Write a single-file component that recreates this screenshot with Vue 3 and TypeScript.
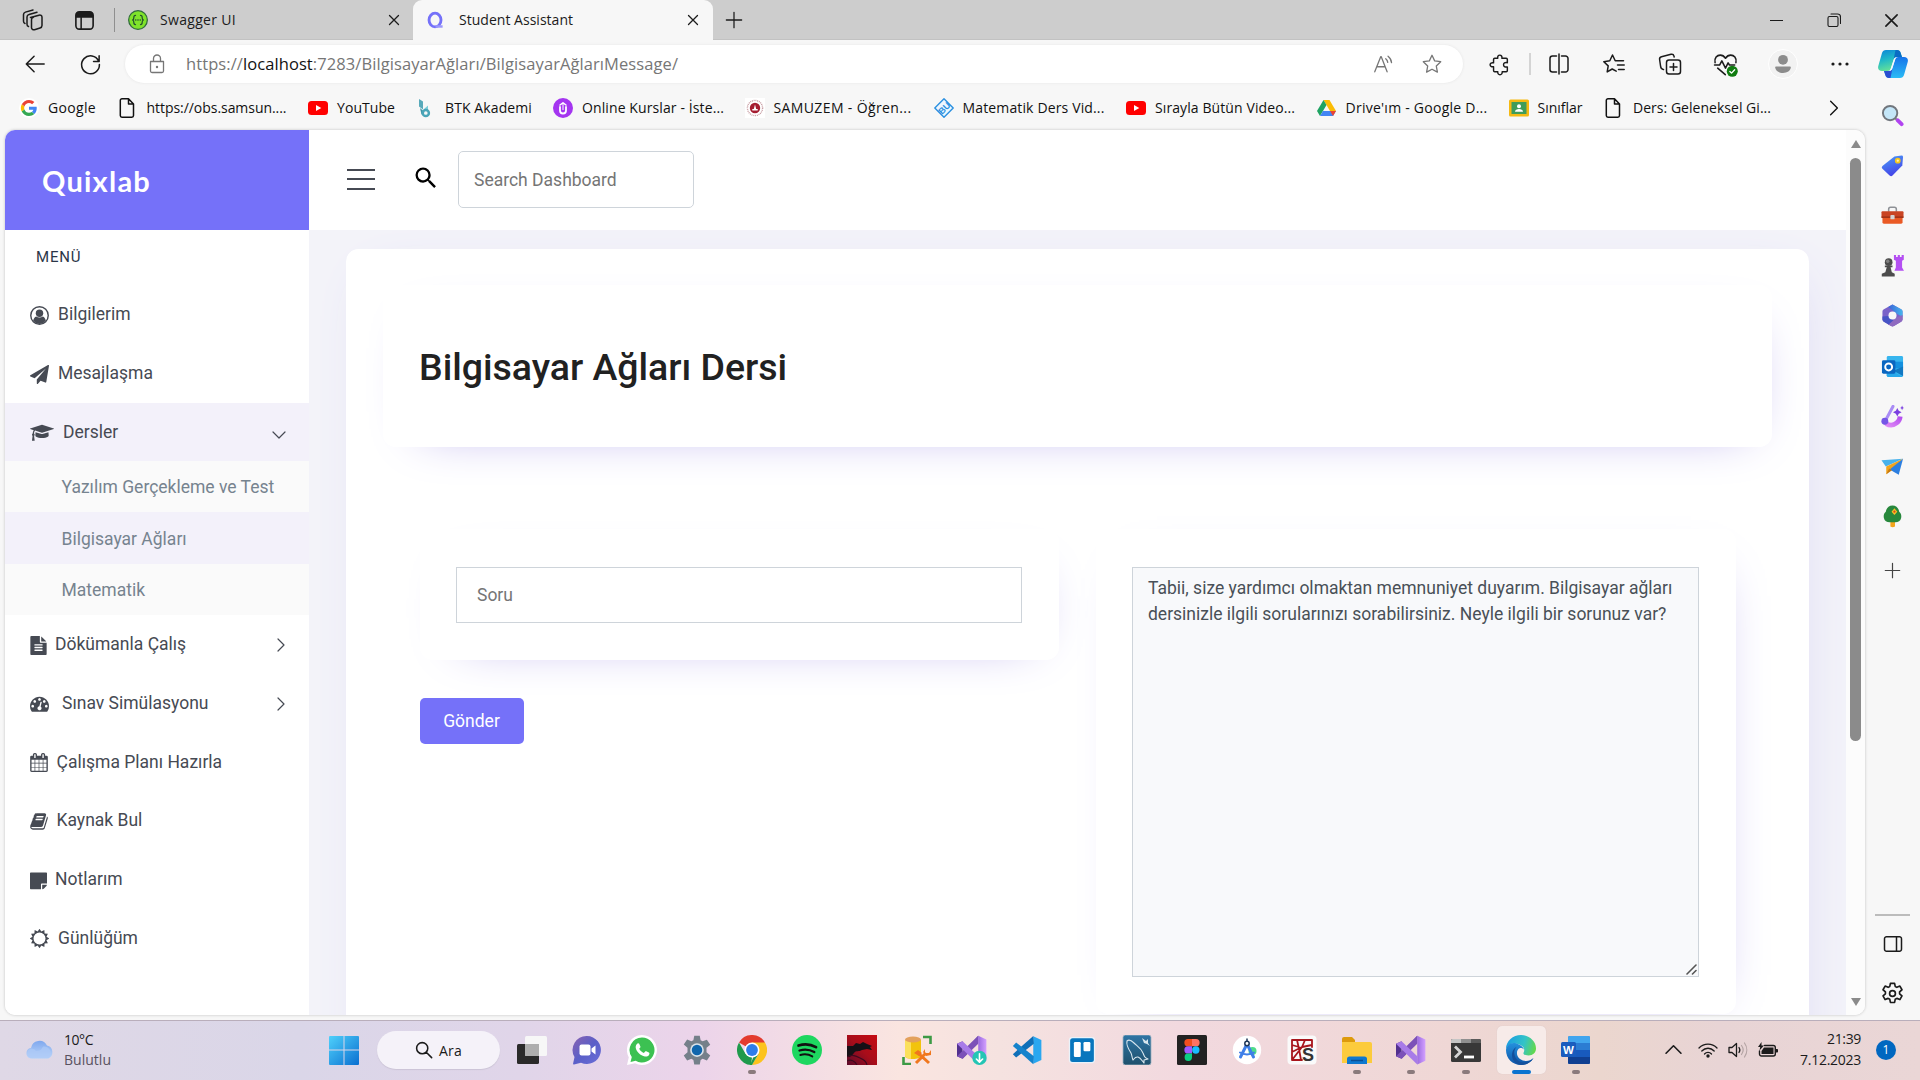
<script setup lang="ts">
import { h } from 'vue'

interface Icon { vb: string; body: string }

const line = (d: string, w = 1.5, c = 'currentColor') =>
  `<path d="${d}" fill="none" stroke="${c}" stroke-width="${w}" stroke-linecap="round" stroke-linejoin="round"/>`

const sunPoints = Array.from({ length: 24 }, (_, i) => {
  const r = i % 2 ? 7.6 : 10.2
  const a = (i * Math.PI) / 12
  return `${(10 + r * Math.sin(a)).toFixed(2)} ${(10 - r * Math.cos(a)).toFixed(2)}`
}).join('L')

const gearOutline = 'M10 2.2h4l.6 3 1.6.9 2.9-1.2 2 3.5-2.3 2v1.9l2.3 2-2 3.5-2.9-1.1-1.6.9-.6 3h-4l-.6-3-1.6-.9-2.9 1.1-2-3.5 2.3-2v-1.9l-2.3-2 2-3.5 2.9 1.2 1.6-.9z'

const vsBody = (id: string) =>
  `<defs><linearGradient id="${id}" x1="0" x2="1"><stop offset="0" stop-color="#9b6be0"/><stop offset="1" stop-color="#d3a0ff"/></linearGradient></defs>
  <path d="M0 7 4.500 5v14L0 17z" fill="#52308f"/><path d="M17 .5L4.500 14 4.500 19 17 6z" fill="#6b45a8"/><path d="M17 .5V7L4.500 19 0 17z" fill="#7c51b8"/><path d="M4.500 5L17 17v6.500L0 7z" fill="#a87be8"/><path d="M17 .5l6.500 3v17l-6.500 3z" fill="url(#${id})"/>`

const icons: Record<string, Icon> = {
  userCircle: { vb: '0 0 20 20', body: '<circle cx="10" cy="10" r="9.2" fill="none" stroke="currentColor" stroke-width="1.5"/><circle cx="10" cy="7.6" r="3.9" fill="currentColor"/><path d="M3.3 15.6c.5-2.700 1.700-4.100 3.200-4.600 2 1.600 5 1.600 7 0 1.500.5 2.700 1.900 3.200 4.600A9 9 0 0 1 10 19a9 9 0 0 1-6.700-3.400z" fill="currentColor"/>' },
  plane: { vb: '0 0 1792 1792', body: '<path fill="currentColor" d="M1764 11q33 24 27 64l-256 1536q-5 29-32 45-14 8-31 8-11 0-24-5l-453-185-242 295q-18 23-49 23-13 0-22-4-19-7-30.5-23.500t-11.500-36.500v-349l864-1059-1069 925-395-162q-37-14-40-55-2-40 32-59l1664-960q15-9 32-9 20 0 36 11z"/>' },
  cap: { vb: '-256 0 2304 1792', body: '<path fill="currentColor" d="M1518 860l18 316q4 69-82 128t-235 93.500-323 34.500-323-34.500-235-93.500-82-128l18-316 574 181q22 7 48 7t48-7zm530-324q0 23-22 31l-1120 352q-4 1-10 1t-10-1l-652-206q-43 34-71 111.500t-34 178.500q63 36 63 109 0 69-58 107l58 433q2 14-8 25-9 11-24 11h-192q-15 0-24-11-10-11-8-25l58-433q-58-38-58-107 0-73 65-111 11-207 98-330l-333-104q-22-8-22-31t22-31l1120-352q4-1 10-1t10 1l1120 352q22 8 22 31z"/>' },
  fileText: { vb: '128 0 1536 1792', body: '<path fill="currentColor" d="M1596 476q14 14 28 36h-472v-472q22 14 36 28zm-476 164h544v1056q0 40-28 68t-68 28h-1344q-40 0-68-28t-28-68v-1600q0-40 28-68t68-28h800v544q0 40 28 68t68 28zm160 736v-64q0-14-9-23t-23-9h-704q-14 0-23 9t-9 23v64q0 14 9 23t23 9h704q14 0 23-9t9-23zm0-256v-64q0-14-9-23t-23-9h-704q-14 0-23 9t-9 23v64q0 14 9 23t23 9h704q14 0 23-9t9-23zm0-256v-64q0-14-9-23t-23-9h-704q-14 0-23 9t-9 23v64q0 14 9 23t23 9h704q14 0 23-9t9-23z"/>' },
  gauge: { vb: '0 0 1792 1792', body: '<path fill="currentColor" d="M384 1152q0-53-37.500-90.500t-90.500-37.500-90.500 37.500-37.500 90.500 37.500 90.500 90.500 37.500 90.500-37.500 37.500-90.500zm192-448q0-53-37.500-90.500t-90.500-37.500-90.500 37.500-37.500 90.500 37.500 90.500 90.500 37.500 90.500-37.500 37.500-90.500zm428 481l101-382q6-26-7.500-48.500t-38.500-29.500-48 6.500-30 39.500l-101 382q-60 5-107 43.500t-63 98.500q-20 77 20 146t117 89 146-20 89-117q16-60-6-117t-72-91zm660-33q0-53-37.500-90.500t-90.500-37.500-90.500 37.500-37.500 90.500 37.500 90.500 90.500 37.500 90.500-37.500 37.500-90.500zm-640-640q0-53-37.500-90.500t-90.500-37.500-90.500 37.500-37.500 90.500 37.500 90.500 90.500 37.500 90.500-37.500 37.500-90.500zm448 192q0-53-37.500-90.500t-90.500-37.500-90.500 37.500-37.500 90.500 37.500 90.500 90.500 37.500 90.500-37.500 37.500-90.500zm320 448q0 261-141 483-19 29-54 29h-1402q-35 0-54-29-141-221-141-483 0-182 71-348t191-286 286-191 348-71 348 71 286 191 191 286 71 348z"/>' },
  calendar: { vb: '64 0 1664 1792', body: '<path fill="currentColor" d="M192 1664h288v-288h-288v288zm352 0h320v-288h-320v288zm-352-352h288v-320h-288v320zm352 0h320v-320h-320v320zm-352-384h288v-288h-288v288zm736 736h320v-288h-320v288zm-384-736h320v-288h-320v288zm768 736h288v-288h-288v288zm-384-352h320v-320h-320v320zm-352-864v-288q0-13-9.500-22.500t-22.500-9.500h-64q-13 0-22.500 9.500t-9.500 22.500v288q0 13 9.500 22.500t22.500 9.500h64q13 0 22.500-9.500t9.500-22.500zm736 864h288v-320h-288v320zm-384-384h320v-288h-320v288zm384 0h288v-288h-288v288zm32-480v-288q0-13-9.500-22.500t-22.500-9.500h-64q-13 0-22.500 9.500t-9.500 22.500v288q0 13 9.500 22.500t22.500 9.500h64q13 0 22.500-9.500t9.500-22.500zm384-64v1280q0 52-38 90t-90 38h-1408q-52 0-90-38t-38-90v-1280q0-52 38-90t90-38h128v-96q0-66 47-113t113-47h64q66 0 113 47t47 113v96h384v-96q0-66 47-113t113-47h64q66 0 113 47t47 113v96h128q52 0 90 38t38 90z"/>' },
  book: { vb: '64 0 1664 1792', body: '<path fill="currentColor" d="M1703 478q40 57 18 129l-275 906q-19 64-76.500 107.500t-122.500 43.500h-923q-77 0-148.500-53.500t-99.500-131.500q-24-67-2-127 0-4 3-27t4-37q1-8-3-21.500t-3-19.500q2-11 8-21t16.500-23.500 16.500-23.500q23-38 45-91.500t30-91.500q3-10 .5-30t-.5-28q3-11 17-28t17-23q21-36 42-92t25-90q1-9-2.500-32t.5-28q4-13 22-30.500t22-22.500q19-26 42.500-84.500t27.500-96.500q1-8-3-25.500t-2-26.500q2-8 9-18t18-23 17-21q8-12 16.500-30.500t15-35 16-36 19.500-32 26.500-23.500 36-11.500 47.500 5.500l-1 3q38-9 51-9h761q74 0 114 56t18 130l-274 906q-36 119-71.500 153.500t-128.500 34.500h-869q-27 0-38 15-11 16-1 43 24 70 144 70h923q29 0 56-15.500t35-41.500l300-987q7-22 5-57 38 15 59 43zm-1064 2q-4 13 2 22.500t20 9.500h608q13 0 25.500-9.500t16.500-22.500l21-64q4-13-2-22.500t-20-9.500h-608q-13 0-25.500 9.500t-16.500 22.500zm-83 256q-4 13 2 22.500t20 9.500h608q13 0 25.500-9.500t16.500-22.500l21-64q4-13-2-22.500t-20-9.500h-608q-13 0-25.500 9.500t-16.500 22.500z"/>' },
  note: { vb: '0 0 17 19', body: '<path fill="currentColor" d="M1 1.500h15c.6 0 1 .4 1 1V12.500h-5c-.6 0-1 .4-1 1v4.700H1c-.6 0-1-.4-1-1V2.500c0-.6.4-1 1-1z"/><path fill="currentColor" d="M12.200 13.700h4.700c-.1.700-.3 1.200-.7 1.600l-2.200 2.200c-.4.400-1 .7-1.800.7z"/>' },
  sun: { vb: '0 0 20 20', body: `<path fill="currentColor" fill-rule="evenodd" d="M${sunPoints}ZM10 3.700a6.300 6.300 0 1 0 0 12.600 6.300 6.300 0 0 0 0-12.600z"/>` },
  chevR: { vb: '0 0 16 16', body: line('M5 2l6 6-6 6', 1.2) },
  chevD: { vb: '0 0 16 16', body: line('M2 5l6 6 6-6', 1.2) },
  magnify: { vb: '0 0 24 24', body: '<path fill="currentColor" d="M9.500 3A6.500 6.500 0 0 1 16 9.500c0 1.610-.59 3.090-1.560 4.230l.27.270h.79l5 5-1.500 1.500-5-5v-.79l-.27-.27A6.516 6.516 0 0 1 9.500 16 6.500 6.500 0 0 1 3 9.500 6.500 6.500 0 0 1 9.500 3m0 2C7 5 5 7 5 9.500S7 14 9.500 14 14 12 14 9.500 12 5 9.500 5z"/>' },
  workspaces: { vb: '0 0 24 24', body: line('M9.500 9.500l8.500-2.300c1.700-.4 3 .5 3 2v8.300c0 1.300-.7 2.100-2 2.500l-5.500 1.700c-1.500.4-3-.5-3-2v-8c0-1.300.7-2.200 2-2.500M7.500 18.500c-1-.3-1.500-1.200-1.500-2.300V9c0-1.300.8-2.200 2-2.500l8-2.200M4 15.500c-1-.4-1.500-1.200-1.500-2.200V6.500c0-1.200.7-2 1.900-2.400L12 2') },
  tabActions: { vb: '0 0 24 24', body: `<rect x="3" y="3" width="18" height="18" rx="3.500" fill="none" stroke="currentColor" stroke-width="1.700"/><path d="M3 9V6.500A3.500 3.500 0 0 1 6.500 3h11A3.500 3.500 0 0 1 21 6.500V9z" fill="currentColor"/>${line('M8.500 9v12', 1.600)}` },
  swagger: { vb: '0 0 24 24', body: `<circle cx="12" cy="12" r="11.200" fill="#7fe32b" stroke="#2f6a3c" stroke-width="1.500"/>${line('M9 6.500c-2 0-2 1-2 2.500s0 2.500-1.500 3c1.500.5 1.500 1.500 1.500 3s0 2.500 2 2.500M15 6.500c2 0 2 1 2 2.500s0 2.500 1.500 3c-1.500.5-1.500 1.500-1.500 3s0 2.500-2 2.500', 1.500, '#23512f')}<g fill="#23512f"><circle cx="9.300" cy="12" r="1"/><circle cx="12" cy="12" r="1"/><circle cx="14.700" cy="12" r="1"/></g>` },
  q: { vb: '0 0 20 20', body: '<ellipse cx="9.500" cy="9.500" rx="6.300" ry="7.200" fill="none" stroke="#7571f9" stroke-width="3"/><path d="M10 16.300h7.500" stroke="#9a97fb" stroke-width="2.600"/>' },
  close: { vb: '0 0 12 12', body: line('M1.500 1.500l9 9M10.500 1.500l-9 9', 1.300) },
  plus: { vb: '0 0 20 20', body: line('M10 1.500v17M1.500 10h17', 1.400) },
  min: { vb: '0 0 14 14', body: '<path d="M0 7h14" stroke="currentColor" stroke-width="1.100"/>' },
  restore: { vb: '0 0 14 14', body: line('M2.500 3.500h7a1.500 1.500 0 0 1 1.500 1.500v7a1.500 1.500 0 0 1-1.500 1.500h-7A1.500 1.500 0 0 1 1 12V5a1.500 1.500 0 0 1 1.500-1.500zM4 1h6.500A3 3 0 0 1 13.500 4v6.500', 1.100) },
  back: { vb: '0 0 24 24', body: line('M22 12H2.500M11 3.500L2.500 12l8.500 8.500', 1.600) },
  refresh: { vb: '0 0 24 24', body: line('M20.500 8.500A9.300 9.300 0 1 0 21.300 12M21 3v5.800h-5.800', 1.600) },
  lock: { vb: '0 0 20 20', body: line('M3.500 7.500h13v9.500a1.500 1.500 0 0 1-1.500 1.500h-10A1.500 1.500 0 0 1 3.500 17zM6.500 7.500V4.500a3.500 3.500 0 0 1 7 0v3', 1.300) + '<circle cx="10" cy="13" r="1.200" fill="currentColor"/>' },
  readAloud: { vb: '0 0 24 24', body: line('M3 20.500L9.500 4h.6l6.400 16.500M5.300 15h9M15 6.200c1.200 1 2 2.400 2.200 4M17.500 3.500c2.200 1.700 3.600 4.200 3.800 7', 1.400) },
  star: { vb: '0 0 24 24', body: line('M12 2.500l2.900 6.100 6.600.9-4.800 4.700 1.200 6.700L12 17.700l-5.900 3.200 1.200-6.700L2.500 9.500l6.600-.9z', 1.400) },
  puzzle: { vb: '0 0 24 24', body: line('M7 5.500h3.200c-.4-2 .6-3.300 2.100-3.300s2.600 1.300 2.200 3.300H19c.8 0 1.200.5 1.200 1.200v3.400c-2.700-.5-4 .6-4 2.200s1.300 2.700 4 2.200v3.800c0 .8-.5 1.200-1.200 1.200h-4.200c.3 2-.8 3.100-2.300 3.100s-2.600-1.100-2.300-3.100H7c-.8 0-1.200-.4-1.200-1.200v-4c-2.300.3-3.600-.6-3.600-2s1.300-2.300 3.600-2V6.700c0-.8.4-1.200 1.200-1.200z', 1.500) },
  split: { vb: '0 0 24 24', body: line('M9.500 4H5.500A2.500 2.500 0 0 0 3 6.500v11A2.500 2.500 0 0 0 5.500 20h4M14.500 4h4A2.500 2.500 0 0 1 21 6.500v11a2.500 2.500 0 0 1-2.500 2.500h-4M12 2v20', 1.500) },
  favs: { vb: '0 0 24 24', body: line('M14.200 19.200l-4-2.200-5 2.900 1-6L1.800 9.700l6-.9L10.500 3l2.700 5.800h8.300M15.500 13h6.700M16.500 17.500h5.700', 1.500) },
  collections: { vb: '0 0 24 24', body: line('M11 8h9a2.500 2.500 0 0 1 2.500 2.500v9A2.500 2.500 0 0 1 20 22h-9a2.500 2.500 0 0 1-2.500-2.500v-9A2.500 2.500 0 0 1 11 8zM15.500 11.500v7M12 15h7M5.500 17.500l-.8-.2a3 3 0 0 1-2-2.300L1.600 7.500A2.500 2.500 0 0 1 3.500 4.700l9.500-2.400a2.500 2.500 0 0 1 3 1.800l.2.900', 1.500) },
  heart: { vb: '0 0 24 24', body: line('M2 10.200C1 5.500 4 3 7 3c2.200 0 3.800 1.200 5 3 1.200-1.800 2.800-3 5-3 3 0 6 2.500 5 7.200M1.500 12.500h4.800l2.200-4 3.500 7 2.500-5 1.300 2h5M4.500 15.500l7.300 6.300', 1.500) + `<circle cx="18.500" cy="18.500" r="5.300" fill="#107c10"/>${line('M16.200 18.700l1.600 1.600 3-3.200', 1.300, '#fff')}` },
  avatar: { vb: '0 0 30 30', body: '<circle cx="15" cy="15" r="14.500" fill="#f2f2f2" stroke="#fff"/><circle cx="15" cy="10.800" r="4.900" fill="#8c8c8c"/><path d="M8.300 17.500h13.400c.8 0 1.200.500 1.100 1.300-.5 3-3.500 5.200-7.800 5.200s-7.300-2.200-7.800-5.200c-.1-.8.3-1.300 1.100-1.300z" fill="#8c8c8c"/>' },
  dots: { vb: '0 0 24 24', body: '<g fill="currentColor"><circle cx="5" cy="12" r="1.600"/><circle cx="12" cy="12" r="1.600"/><circle cx="19" cy="12" r="1.600"/></g>' },
  copilot: { vb: '0 0 30 30', body: '<defs><linearGradient id="cp1" x1="0" y1="0" x2="0.300" y2="1"><stop offset="0" stop-color="#0b84d8"/><stop offset=".5" stop-color="#20b8c8"/><stop offset="1" stop-color="#62e09a"/></linearGradient><linearGradient id="cp2" x1="0" y1="0" x2="0" y2="1"><stop offset="0" stop-color="#1673ea"/><stop offset="1" stop-color="#2bbcf5"/></linearGradient></defs><path d="M8 1h11c2 0 3 1 3.500 2.500L24 8h-5c-2 0-3 1-3.500 3L13 19c-.6 2-1.500 3-3.500 3H4c-3 0-4.500-2-3.700-5L4 4c.6-2 2-3 4-3z" fill="url(#cp1)"/><path d="M22 29H11c-2 0-3-1-3.500-2.500L6 22h5c2 0 3-1 3.500-3L17 11c.6-2 1.500-3 3.500-3H26c3 0 4.500 2 3.700 5L26 26c-.6 2-2 3-4 3z" fill="url(#cp2)"/><path d="M6 22h5c2 0 3-1 3.500-3l-2 10H11c-2 0-3-1-3.500-2.500z" fill="#2a4fd0"/><path d="M17.500 1H19c2 0 3 1 3.500 2.500L24 8h-5c-2 0-3 1-3.500 3z" fill="#0a6cc4"/><path d="M12.800 19.500l3-9c.6-1.600 1.500-2.300 2.800-2.300-1 .8-1.300 1.600-1.700 2.800l-2.700 8.500c-.5 1.600-1.300 2.300-2.800 2.300.8-.6 1.100-1.300 1.400-2.300z" fill="#f3faff"/>' },
  google: { vb: '0 0 48 48', body: '<circle cx="24" cy="24" r="24" fill="#fff"/><g transform="translate(4.500 4.500) scale(.81)"><path fill="#EA4335" d="M24 9.500c3.540 0 6.710 1.220 9.210 3.600l6.850-6.850C35.900 2.380 30.470 0 24 0 14.620 0 6.510 5.380 2.560 13.220l7.980 6.190C12.430 13.720 17.740 9.500 24 9.500z"/><path fill="#4285F4" d="M46.980 24.550c0-1.570-.15-3.090-.38-4.550H24v9.020h12.940c-.58 2.960-2.260 5.480-4.780 7.180l7.730 6c4.510-4.180 7.090-10.360 7.090-17.650z"/><path fill="#FBBC05" d="M10.530 28.590c-.48-1.450-.76-2.990-.76-4.590s.27-3.140.76-4.590l-7.980-6.190C.92 16.460 0 20.120 0 24c0 3.880.92 7.540 2.560 10.780l7.970-6.190z"/><path fill="#34A853" d="M24 48c6.480 0 11.930-2.130 15.890-5.810l-7.730-6c-2.150 1.450-4.920 2.300-8.160 2.300-6.260 0-11.570-4.220-13.470-9.910l-7.980 6.190C6.510 42.620 14.620 48 24 48z"/></g>' },
  file: { vb: '0 0 20 20', body: line('M4 .8h6.500l5 5.200v11.500a1.700 1.700 0 0 1-1.700 1.700H4a1.700 1.700 0 0 1-1.700-1.700v-15A1.700 1.700 0 0 1 4 .8zM10.500 1v5h5', 1.500) },
  youtube: { vb: '0 0 20 20', body: '<rect x="0" y="3" width="20" height="14" rx="3.500" fill="#f00"/><path d="M8 7l5.300 3L8 13z" fill="#fff"/>' },
  btk: { vb: '0 0 20 20', body: '<path d="M3 1l4 2.500v8L3 8.500z" fill="#58a9ba"/><path d="M4 10l4.500 4-3 2.500z" fill="#3f93a6"/><path d="M8 11l4-3.500v5z" fill="#7ccbd8"/><circle cx="9.800" cy="15" r="3.100" fill="none" stroke="#4aa5b8" stroke-width="2.500"/>' },
  udemy: { vb: '0 0 20 20', body: `<circle cx="10" cy="10" r="10" fill="#a435f0"/>${line('M7 9v3.500a3 3 0 0 0 6 0V9', 1.800, '#fff')}${line('M7 7l3-2.200L13 7', 1.500, '#fff')}<path d="M10 5v7" stroke="#fff" stroke-width="1"/>` },
  samuzem: { vb: '0 0 20 20', body: '<rect width="20" height="20" fill="#fff"/><circle cx="10" cy="10" r="7.600" fill="none" stroke="#c9a0a6" stroke-width="1.400" stroke-dasharray="1 .8"/><circle cx="10" cy="10" r="5.200" fill="#a51c30"/><path d="M10 6.500l1.200 4.500h1.500v1.500H7.300V11h1.500z" fill="#fff"/>' },
  bu: { vb: '0 0 20 20', body: '<path d="M10 .8L19.200 10 10 19.200.8 10z" fill="#eef7ff" stroke="#2b90e0" stroke-width="1.400" stroke-linejoin="round"/><text x="10" y="13.500" font-size="9" font-weight="700" font-family="Liberation Sans, sans-serif" text-anchor="middle" fill="#2b90e0" transform="rotate(-45 10 10)">BU</text>' },
  drive: { vb: '0 0 20 20', body: '<path d="M6.500 2h6L19 13h-6z" fill="#fbbc04"/><path d="M6.500 2L0 13l3 5L9.500 7z" fill="#1ea362"/><path d="M6 13h13l-3 5H3z" fill="#4285f4"/><path d="M13 13h6l-3 5z" fill="#ea4335"/>' },
  classroom: { vb: '0 0 20 20', body: '<rect y="1.500" width="20" height="17" rx="1.500" fill="#f5b912"/><rect x="2.500" y="4" width="15" height="12" fill="#3f9c5a"/><circle cx="10" cy="8.200" r="2" fill="#fff"/><path d="M6 13.800c0-2 2-2.800 4-2.800s4 .8 4 2.800z" fill="#fff"/>' },
  sSearch: { vb: '0 0 24 24', body: '<path d="M14.500 14.500l3.500 3.500" stroke="#8a8f96" stroke-width="2.500"/><path d="M17.500 17l4 4" stroke="#b144f0" stroke-width="4" stroke-linecap="round"/><circle cx="9.500" cy="9.500" r="7.500" fill="#c4e6f8" stroke="#71767d" stroke-width="2"/>' },
  sTag: { vb: '0 0 24 24', body: '<defs><linearGradient id="tg" x1="0" y1="0" x2=".4" y2="1"><stop offset="0" stop-color="#4aa0f8"/><stop offset="1" stop-color="#4445e8"/></linearGradient></defs><path d="M14 2.500L21.500 1.500q1.500 0 1.500 1.500l-.8 9L12 22.500q-1.500 1.200-3 0l-7.500-7q-1.500-1.500 0-3z" fill="url(#tg)"/><circle cx="17.500" cy="7" r="3" fill="#f5c51c"/><circle cx="17.500" cy="7" r="1.200" fill="#fff3b0"/>' },
  sToolbox: { vb: '0 0 24 24', body: '<path d="M8 8V5.500C8 4.300 9 3.500 10 3.500h4c1 0 2 .8 2 2V8" fill="none" stroke="#8e9196" stroke-width="1.600"/><rect x=".5" y="7.500" width="23" height="7" rx="1" fill="#c94423"/><rect x="1.500" y="13.500" width="21" height="7" rx="1.500" fill="#ea5a25"/><path d="M.5 13h23v1.500H.5z" fill="#9a3016"/><rect x="9.800" y="11.500" width="4.400" height="4.500" rx="1" fill="#d4d4d4"/>' },
  sChess: { vb: '0 0 24 24', body: '<path d="M13.500 1h2.200v2h1.800V1h2.200v2h1.800V1h2.300v5l-1.800 1v7l2 3.500h-10L15.500 14V7l-2-1z" fill="#b450f2"/><g fill="#4c4c4c"><circle cx="8" cy="8.500" r="4"/><path d="M4 12h8v1.800h-2l1.300 5.200 3 1.500V23.500H.8V20.500l3.700-1.500L6 13.800H4z"/></g><circle cx="7" cy="7.500" r="1.800" fill="#818181"/>' },
  s365: { vb: '0 0 24 24', body: '<defs><linearGradient id="m3" x1="0" x2="1"><stop offset="0" stop-color="#3b62d6"/><stop offset="1" stop-color="#46b6ee"/></linearGradient></defs><path d="M12 .5l9 5c1 .6 1.500 1.500 1.500 2.500v8c0 1-.5 1.900-1.500 2.500l-7.500 4.500c-1 .6-2 .6-3 0L3 18.500c-1-.6-1.500-1.500-1.500-2.500V8c0-1 .5-1.900 1.500-2.500z" fill="#7a62c9"/><path d="M7.500 3L12 .5l9 5c1 .6 1.500 1.500 1.500 2.500v5.500L16 10l-4-3.500z" fill="url(#m3)"/><path d="M22.500 11.500V16c0 1-.5 1.900-1.500 2.500l-7.500 4.500c-1 .6-2 .6-3 0L7 21l9-7z" fill="#8f6ac0"/><path d="M1.500 13v3c0 1 .5 1.900 1.500 2.500L8 21.500l5-4.500-5-4.500z" fill="#4754c5"/><circle cx="12" cy="12" r="4.200" fill="#f7f7f7"/>' },
  sOutlook: { vb: '0 0 24 24', body: '<rect x="6" y="1" width="17" height="22" rx="1.500" fill="#37b5ee"/><path d="M6 7h17v7H6z" fill="#1490df"/><path d="M6 14l17 9H7.500A1.500 1.500 0 0 1 6 21.500z" fill="#28a8ea"/><path d="M23 12v10L13 16.500z" fill="#1278c2"/><rect x="1" y="5.500" width="14" height="14" rx="1.500" fill="#0a66c0"/><circle cx="8" cy="12.500" r="3.600" fill="none" stroke="#fff" stroke-width="2"/>' },
  sDesigner: { vb: '0 0 24 24', body: '<defs><linearGradient id="dg" x1="0" y1="1" x2="1" y2="0"><stop offset="0" stop-color="#e08af5"/><stop offset="1" stop-color="#b34df0"/></linearGradient></defs><path d="M4 16c0 3.500 3 5 6.500 5S19.500 18 20 12" fill="none" stroke="url(#dg)" stroke-width="5"/><path d="M12.500 1.500l-7.500 14" stroke="#a98cf5" stroke-width="3.200" stroke-linecap="round"/><circle cx="4" cy="17" r="3.600" fill="#7556e6"/><path d="M17 3l1.500 3L21.500 7.500l-3 1.500L17 12l-1.500-3-3-1.500 3-1.500zM22 .5l.7 1.800 1.300.7-1.300.7L22 5.500l-.7-1.800L20 3l1.300-.7z" fill="#7b3fe0"/>' },
  sPlane: { vb: '0 0 24 24', body: '<path d="M.5 5.500L23 4 5 12z" fill="#48b2ec"/><path d="M23 4L5.500 12v8l6-5z" fill="#f2a41c"/><path d="M23 4l-4.500 16.500L9 15z" fill="#2d7fe0"/><path d="M5.500 20l3-6 3 2z" fill="#c77a10"/>' },
  sTree: { vb: '0 0 24 24', body: '<path d="M9.800 16h4.800v6.500q-2.400 1.300-4.800 0z" fill="#f3a51c"/><path d="M12 .5c4 0 6.500 3 7 6.500 2 1.500 2.500 4 2 6.500-.7 3-3 4.500-6 4.500H9c-3 0-5.300-1.500-6-4.500-.5-2.500 0-5 2-6.500C5.500 3.500 8 .5 12 .5z" fill="#27883c"/><path d="M14 3.500l3 3.500-3 3.500L11 7z" fill="#f7c325"/><circle cx="14" cy="7" r="1.200" fill="#d8481c"/>' },
  panel: { vb: '0 0 20 20', body: line('M4 2.800h12A2 2 0 0 1 18.500 5v10a2 2 0 0 1-2.500 2.200H4A2 2 0 0 1 1.500 15V5A2 2 0 0 1 4 2.800zM13.500 3v14', 1.500) },
  gear: { vb: '0 0 24 24', body: line(gearOutline, 1.600) + '<circle cx="12" cy="12" r="2.800" fill="none" stroke="currentColor" stroke-width="1.600"/>' },
  grip: { vb: '0 0 11 11', body: line('M1 10L10 1', 1.600, '#555') + line('M6.500 10L10 6.500', 1.600, '#555') },
  cloud: { vb: '0 0 30 20', body: '<defs><linearGradient id="cl" x1="0" y1="0" x2="0" y2="1"><stop offset="0" stop-color="#7fa8ee"/><stop offset="1" stop-color="#bcd6fa"/></linearGradient></defs><path d="M6 9a8.500 8.500 0 0 1 16-2.500A6.800 6.800 0 0 1 23 19.500H6A5.300 5.300 0 0 1 6 9z" fill="url(#cl)"/><path d="M6.500 9.500a5 5 0 0 1 4.500 2.500c3-1 4 1 7-4.500A6.800 6.800 0 0 1 23.500 19.300H6.200A5 5 0 0 1 6.500 9.500z" fill="#aecbf6" opacity=".7"/>' },
  start: { vb: '0 0 30 30', body: '<defs><linearGradient id="st" x1="0" y1="0" x2="1" y2="1"><stop offset="0" stop-color="#4fd0fb"/><stop offset="1" stop-color="#0a6fd0"/></linearGradient></defs><path d="M1 1h13.500v13.500H0V2a1 1 0 0 1 1-1zM15.500 1H29a1 1 0 0 1 1 1v12.500H15.500zM0 15.500h14.500V30H1a1 1 0 0 1-1-1zM15.500 15.500H30V29a1 1 0 0 1-1 1H15.500z" fill="url(#st)"/>' },
  search: { vb: '0 0 20 20', body: line('M8 1.800a6.200 6.200 0 1 1 0 12.400A6.200 6.200 0 0 1 8 1.800zM12.500 12.500l6 6', 1.700) },
  taskView: { vb: '0 0 30 30', body: '<rect x="0" y="9" width="22" height="20" rx="1.500" fill="#2a2a2a"/><rect x="8" y="1" width="22" height="20" rx="1.500" fill="#f7f7f7"/><path d="M8 9h14v12H9.500A1.500 1.500 0 0 1 8 19.500z" fill="#aeaeae"/>' },
  chat: { vb: '0 0 30 30', body: '<defs><linearGradient id="ch" x1="0" y1="0" x2="1" y2="1"><stop offset="0" stop-color="#8a62b0"/><stop offset=".5" stop-color="#5a5fc8"/><stop offset="1" stop-color="#6b6fd8"/></linearGradient></defs><path d="M15 1a14 14 0 1 1-6 26.700L2 29.500c-.8.2-1-.3-.9-1L2.500 22A14 14 0 0 1 15 1z" fill="url(#ch)"/><rect x="7.500" y="9.500" width="11" height="11" rx="2" fill="#fff"/><path d="M19.500 13.500l4-3v9l-4-3z" fill="#fff"/>' },
  whatsapp: { vb: '0 0 30 30', body: '<path d="M15 0a15 15 0 1 1-7 28.300L0 30l1.800-7.700A15 15 0 0 1 15 0z" fill="#fff"/><path d="M15 2.500a12.500 12.500 0 1 1-6.300 23.300l-5.200 1.300 1.300-5A12.500 12.500 0 0 1 15 2.500z" fill="#3cc152"/><path d="M10.500 8.500c.5-.5 1.400-.4 1.700.2l1.200 2.700c.2.500 0 .9-.3 1.300l-.9 1c1 2 2.700 3.500 4.700 4.300l1.200-1.400c.3-.4.700-.5 1.200-.3l2.600 1.300c.5.3.7.700.5 1.300-.5 2-2.600 3-4.500 2.600-4.500-1-8.500-4.700-9.200-8.800-.2-1.700.6-3.200 1.800-4.200z" fill="#fff"/>' },
  settings: { vb: '0 0 24 24', body: '<path d="M9.800.5h4.400l.7 3.600 1.600.9 3.400-1.300 2.700 4-3 2.500v3.600l3 2.500-2.700 4-3.400-1.300-1.600.9-.7 3.600H9.800l-.7-3.600-1.600-.9-3.400 1.300-2.700-4 3-2.500v-3.600l-3-2.500 2.700-4L7.500 5l1.600-.9z" fill="#75808a"/><circle cx="12" cy="12" r="5.500" fill="#d8e2ea"/><circle cx="12" cy="12" r="4.200" fill="#0f66ad"/>' },
  chrome: { vb: '0 0 30 30', body: '<path d="M15 15L2 7.500a15 15 0 0 1 26 0z" fill="#e33b2e"/><path d="M15 15V7.500h13A15 15 0 0 1 15 30l6.500-11.200z" fill="#fcc31e"/><path d="M2 7.500L8.500 18.700 15 22.500l-1 7.500A15 15 0 0 1 2 7.500z" fill="#1f9a4c"/><path d="M21.500 18.800L15 30a15 15 0 0 1-2-.1l3.500-8z" fill="#1f9a4c"/><circle cx="15" cy="15" r="7.500" fill="#fff"/><circle cx="15" cy="15" r="5.900" fill="#2e7de9"/>' },
  spotify: { vb: '0 0 30 30', body: `<circle cx="15" cy="15" r="15" fill="#1ed760"/>${line('M6.500 10.500c6-1.800 12.500-1.200 17.500 1.700', 2.700, '#111')}${line('M7.500 15.500c5-1.500 10.500-.9 14.800 1.600', 2.300, '#111')}${line('M8.300 20c4.200-1.200 8.500-.7 12 1.400', 1.900, '#111')}` },
  dragon: { vb: '0 0 30 30', body: '<defs><linearGradient id="dr" x1="0" y1="1" x2="1" y2="0"><stop offset="0" stop-color="#5c0b2c"/><stop offset=".5" stop-color="#a80d1a"/><stop offset="1" stop-color="#c60a12"/></linearGradient></defs><rect width="30" height="30" fill="url(#dr)"/><path d="M0 11l6 0 3-3 4 1 3-2 4 2 5 2-2 1 2 3-5-1-5 1c-3 2-6 0-8 3-2 2-2 4-7 4z" fill="#151016"/><path d="M0 22c5-3 9-1 13 1s6 3 7 7M0 26c4-2 8 0 10 4" fill="none" stroke="#3d0a1e" stroke-width="1.200"/>' },
  dbTool: { vb: '0 0 30 30', body: '<path d="M3 5v16c0 2 4 3 8 3s8-1 8-3V5z" fill="#f2c30c"/><path d="M3 5v16c0 1.600 2.500 2.600 6 2.900V5z" fill="#fbe05a"/><ellipse cx="11" cy="4.500" rx="8" ry="3" fill="#e3a15c"/><path d="M21 2h7.500v7M1.500 22v7H9" fill="none" stroke="#3d9a45" stroke-width="2.600"/><path d="M14 28l10-10M15 17l12 11" stroke="#f0771e" stroke-width="3"/><path d="M12 18l4-3 4 3-3 3zM23 14v4h4l2-3v5l-5 1-3-4z" fill="#f0771e"/>' },
  vsInst: { vb: '0 0 24 24', body: vsBody('vs1') + `<circle cx="18" cy="18.300" r="5.700" fill="#24c5b4"/>${line('M18 15v6.500M15.500 19.200L18 21.700l2.500-2.500', 1.300, '#fff')}` },
  vscode: { vb: '0 0 24 24', body: '<path d="M17 1l6.500 3v16l-6.500 3z" fill="#2aa7f0"/><path d="M17 .7L.7 15.300 3.300 18 17.500 7z" fill="#0f6fb8"/><path d="M17 23.300L.7 8.700 3.300 6 17.500 17z" fill="#1583cc"/>' },
  trello: { vb: '0 0 24 24', body: '<rect x="1.500" y="1.500" width="21" height="21" rx="2.500" fill="#e9f3fa"/><rect x="2.500" y="2.500" width="19" height="19" rx="2" fill="#0876bd"/><rect x="5.500" y="5.500" width="5.500" height="12" rx="1" fill="#fff"/><rect x="13.200" y="5.500" width="5.500" height="7.500" rx="1" fill="#fff"/>' },
  mysql: { vb: '0 0 30 30', body: '<defs><linearGradient id="my" x1="0" y1="0" x2="0" y2="1"><stop offset="0" stop-color="#2f75a5"/><stop offset="1" stop-color="#1f506c"/></linearGradient></defs><rect x="1" y="0" width="28" height="30" rx="2.500" fill="url(#my)" stroke="#9db4c3" stroke-width=".8"/>' + line('M5 6c2-2 5 0 7 2 3 3 7 5 9 10 1 2 1 4 3 5l2 1-4 1 0 3c-2-2-3-5-6-6-3-.5-4 2-5 3-1-2-1-5-2-7-2-3-5-8-4-12z', 1.100, '#d8e6ee') + '<path d="M20 3l4 3 2-2 0 4 2 3-3-2-3-1z" fill="#d8e6ee"/>' },
  figma: { vb: '0 0 30 30', body: '<rect width="30" height="30" rx="1.500" fill="#222"/><path d="M11 4h4v7.300h-4a3.650 3.650 0 0 1 0-7.300z" fill="#f24e1e"/><path d="M15 4h4a3.650 3.650 0 0 1 0 7.300h-4z" fill="#ff7262"/><path d="M15 11.300v7.300h-4a3.650 3.650 0 0 1 0-7.300z" fill="#a259ff"/><circle cx="18.800" cy="15" r="3.700" fill="#1abcfe"/><path d="M11 18.600h4v3.700a3.700 3.700 0 1 1-4-3.700z" fill="#0acf83"/>' },
  androidStudio: { vb: '0 0 30 30', body: `<circle cx="15" cy="15" r="14.200" fill="#fff"/><circle cx="20.500" cy="16" r="4" fill="#4fdc8a"/>${line('M15 9L8.500 22M15 9l6.500 13', 3, '#3f7fe8')}${line('M8 17.500c4 2.500 10 2.500 14 0', 2, '#3f7fe8')}<circle cx="15" cy="8.500" r="2.200" fill="#fff" stroke="#1d3557" stroke-width="1.500"/><path d="M15 3.500v3" stroke="#1d3557" stroke-width="1.500"/>` },
  spyder: { vb: '0 0 30 30', body: `<rect x=".5" y=".5" width="29" height="29" rx="4" fill="#fafafa"/>${line('M5 5h20v7M5 5v20h10M5 17l10-5 3-7M5 25l10-13 10-2M10 5l2 9 2 11M5 10l7 2', 1.800, '#a8151c')}<text x="21" y="26" text-anchor="middle" font-size="18" font-weight="700" font-family="Liberation Sans, sans-serif" fill="#333">S</text>` },
  explorer: { vb: '0 0 30 30', body: '<path d="M0 4a2 2 0 0 1 2-2h8l3 3v6H0z" fill="#dd9a0c"/><path d="M0 7h28a2 2 0 0 1 2 2v19H0z" fill="#fccb3c"/><path d="M5 29v-5a2.500 2.500 0 0 1 2.500-2.500h15A2.500 2.500 0 0 1 25 24v5z" fill="#0f78cf"/><path d="M9 25.500h12" stroke="#0a4f94" stroke-width="1.500"/>' },
  vs: { vb: '0 0 24 24', body: vsBody('vs2') },
  terminal: { vb: '0 0 30 30', body: '<rect x="0" y="4" width="30" height="23" rx="1.500" fill="#383838"/><path d="M1.500 4H10v4H0V5.500A1.500 1.500 0 0 1 1.500 4z" fill="#c5c5c5"/><path d="M10 4h10v4H10z" fill="#8f8f8f"/><path d="M20 4h8.500A1.500 1.500 0 0 1 30 5.500V8H20z" fill="#5a5a5a"/><path d="M4 11.500l5.500 5.500L4 22.500" fill="none" stroke="#d5d5d5" stroke-width="2.800"/><path d="M13 22h10" stroke="#fff" stroke-width="2.800"/>' },
  edge: { vb: '0 0 30 30', body: '<defs><linearGradient id="ed1" x1="0" y1=".3" x2="1" y2=".5"><stop offset="0" stop-color="#1b9de2"/><stop offset=".6" stop-color="#33c3c8"/><stop offset="1" stop-color="#62d84e"/></linearGradient><linearGradient id="ed2" x1="0" y1="0" x2="0" y2="1"><stop offset="0" stop-color="#2490dd"/><stop offset="1" stop-color="#0f55a8"/></linearGradient></defs><path d="M0 14C0 6 7 0 15 0s15 6 15 13.500c0 4-3 7-7.500 7-3.500 0-5.500-1.200-5-2.700.4-1 .9-1.800.7-3.300C18 12 15.500 10 12 9 7 7.500 2 9 0 14z" fill="url(#ed1)"/><path d="M0 15c.5-5 5-8 10.500-6.500 3.500 1 6.500 3 7.500 6-1.200-1.500-3-2-4.500-1.200C10 15 10 21 14 24c4 3 10 2.500 13.500-1C24.500 28 20 30 15 30 6.500 30 0 23.500 0 15z" fill="url(#ed2)"/><path d="M10.500 12c-4 4-2.500 12 3 14.500 4.500 2 10.500.5 14-3.500C24.500 28 20 30 15 30c-6-1-9.500-6-9-11 .3-3 2-6 4.500-7z" fill="#14509c"/>' },
  word: { vb: '0 0 30 30', body: '<rect x="7" y="1" width="22" height="28" rx="1.500" fill="#2b7cd3"/><path d="M8.500 1h19A1.500 1.500 0 0 1 29 2.500V8H7V2.500A1.500 1.500 0 0 1 8.500 1z" fill="#41a5ee"/><path d="M7 15h22v7H7z" fill="#185abd"/><path d="M7 22h22v5.500a1.500 1.500 0 0 1-1.500 1.500h-19A1.500 1.500 0 0 1 7 27.500z" fill="#103f91"/><rect x="0" y="7" width="15" height="15" rx="1.500" fill="#1a5cbe"/><text x="7.500" y="19" text-anchor="middle" font-size="11.500" font-weight="700" font-family="Liberation Sans, sans-serif" fill="#fff">W</text>' },
  up: { vb: '0 0 16 16', body: line('M1 11.500l7-7 7 7', 1.500) },
  wifi: { vb: '0 0 20 16', body: line('M1 6c5-5.300 13-5.300 18 0M3.800 9c3.500-3.700 8.900-3.700 12.400 0M6.500 12c2-2.100 5-2.100 7 0', 1.300) + '<circle cx="10" cy="14" r="1.700" fill="currentColor"/>' },
  speaker: { vb: '0 0 20 16', body: line('M1 5.500h3L8.500 1.500v13L4 10.500H1z', 1.300) + line('M11 5.500c1 1.500 1 3.500 0 5', 1.300) + line('M13.500 3.500c2 2.700 2 6.300 0 9M16.500 1c3 4.200 3 9.800 0 14', 1.200, '#b3a3a3') },
  battery: { vb: '0 0 20 16', body: line('M6.500 3.500h8.800a2 2 0 0 1 2 2v6.500a2 2 0 0 1-2 2H3.500a2 2 0 0 1-2-2V9', 1.400) + '<path d="M18 7h1c.6 0 1 .4 1 1v1.500c0 .6-.4 1-1 1h-1zM6 5.500h9.500v6.500H3.500V9zM3.500 0L0 5h2.200L1.500 8.500 6 3.500H3.500z" fill="currentColor"/>' },
}

const Ico = (p: { n: string; w: number; hh?: number }) =>
  h('svg', { viewBox: icons[p.n].vb, width: p.w, height: p.hh ?? p.w, innerHTML: icons[p.n].body })
Ico.props = ['n', 'w', 'hh']

/* Tracks a label in or out so that it fills the width given for it. */
const vTrack = {
  mounted(el: HTMLElement, b: { value?: number }) {
    if (!b.value) return
    const n = (el.textContent ?? '').trim().length
    const w = el.getBoundingClientRect().width
    el.style.letterSpacing = `${((b.value - w) / n).toFixed(3)}px`
  },
}

const toolbar = [
  { n: 'split', w: 24 }, { n: 'favs', w: 24 }, { n: 'collections', w: 24 }, { n: 'heart', w: 25 },
]
const bookmarks = [
  { n: 'google', t: 'Google', w: 98.5, tw: 48 },
  { n: 'file', t: 'https://obs.samsun....', w: 190.5, tw: 140 },
  { n: 'youtube', t: 'YouTube', w: 108, tw: 58 },
  { n: 'btk', t: 'BTK Akademi', w: 137, tw: 87 },
  { n: 'udemy', t: 'Online Kurslar - İste...', w: 191.5, tw: 142 },
  { n: 'samuzem', t: 'SAMUZEM - Öğren...', w: 189, tw: 138 },
  { n: 'bu', t: 'Matematik Ders Vid...', w: 192.5, tw: 142 },
  { n: 'youtube', t: 'Sırayla Bütün Video...', w: 190.5, tw: 140 },
  { n: 'drive', t: "Drive'ım - Google D...", w: 192, tw: 142 },
  { n: 'classroom', t: 'Sınıflar', w: 95.5, tw: 45 },
  { n: 'file', t: 'Ders: Geleneksel Gi...', w: 221, tw: 138 },
]
const menuTop = [
  { n: 'userCircle', w: 19, g: 9, t: 'Bilgilerim' },
  { n: 'plane', w: 19, g: 9, t: 'Mesajlaşma' },
]
const subMenu = ['Yazılım Gerçekleme ve Test', 'Bilgisayar Ağları', 'Matematik']
const menuBottom = [
  { n: 'fileText', w: 17, g: 8, t: 'Dökümanla Çalış', more: true },
  { n: 'gauge', w: 19, g: 13, t: 'Sınav Simülasyonu', more: true },
  { n: 'calendar', w: 18, g: 8.5, t: 'Çalışma Planı Hazırla' },
  { n: 'book', w: 18, g: 8.5, t: 'Kaynak Bul' },
  { n: 'note', w: 17, g: 8, t: 'Notlarım' },
  { n: 'sun', w: 19, g: 9, t: 'Günlüğüm' },
]
const side = ['sSearch', 'sTag', 'sToolbox', 'sChess', 's365', 'sOutlook', 'sDesigner', 'sPlane', 'sTree']
const apps: { n: string; run?: boolean; on?: boolean }[] = [
  { n: 'taskView' }, { n: 'chat' }, { n: 'whatsapp' }, { n: 'settings' }, { n: 'chrome', run: true },
  { n: 'spotify' }, { n: 'dragon' }, { n: 'dbTool' }, { n: 'vsInst' }, { n: 'vscode' }, { n: 'trello' },
  { n: 'mysql' }, { n: 'figma' }, { n: 'androidStudio' }, { n: 'spyder' }, { n: 'explorer', run: true },
  { n: 'vs', run: true }, { n: 'terminal', run: true }, { n: 'edge', on: true }, { n: 'word', run: true },
]
const answer = 'Tabii, size yardımcı olmaktan memnuniyet duyarım. Bilgisayar ağları dersinizle ilgili sorularınızı sorabilirsiniz. Neyle ilgili bir sorunuz var?'
</script>

<template>
  <div class="screen">
    <header class="tabs">
      <div class="tab-tools"><Ico n="workspaces" :w="24" /><Ico n="tabActions" :w="23" /></div>
      <div class="tab idle">
        <Ico n="swagger" :w="20" /><span class="tab-name"><span v-track="76">Swagger UI</span></span><Ico n="close" :w="12" />
      </div>
      <div class="tab active">
        <Ico n="q" :w="19" /><span class="tab-name"><span v-track="114">Student Assistant</span></span><Ico n="close" :w="12" />
      </div>
      <div class="new-tab"><Ico n="plus" :w="18" /></div>
      <div class="win"><Ico n="min" :w="13" /><Ico n="restore" :w="14" /><Ico n="close" :w="15" /></div>
    </header>

    <div class="address">
      <div class="nav"><Ico n="back" :w="22" /><Ico n="refresh" :w="23" /></div>
      <div class="url">
        <Ico n="lock" :w="20" />
        <span class="url-text"><span v-track="492">https://<b>localhost</b>:7283/BilgisayarAğları/BilgisayarAğlarıMessage/</span></span>
        <Ico n="readAloud" :w="22" /><Ico n="star" :w="22" />
      </div>
      <div class="tools">
        <span class="tool ext"><Ico n="puzzle" :w="23" /></span>
        <i class="bar"></i>
        <span v-for="t in toolbar" :key="t.n" class="tool"><Ico :n="t.n" :w="t.w" /></span>
        <span class="tool avatar"><Ico n="avatar" :w="30" /></span>
        <span class="tool"><Ico n="dots" :w="24" /></span>
        <span class="tool last"><Ico n="copilot" :w="30" /></span>
      </div>
    </div>

    <div class="middle">
      <div class="left">
        <nav class="bookmarks">
          <a v-for="b in bookmarks" :key="b.t" :style="{ width: b.w + 'px' }"><Ico :n="b.n" :w="20" /><span v-track="b.tw">{{ b.t }}</span></a>
          <Ico n="chevR" :w="18" />
        </nav>

        <div class="page">
          <aside class="sidebar">
            <div class="logo"><span v-track="109">Quixlab</span></div>
            <div class="label">MENÜ</div>
            <a v-for="m in menuTop" :key="m.t" class="item" :style="{ gap: m.g + 'px' }"><Ico :n="m.n" :w="m.w" :hh="19" /><span>{{ m.t }}</span></a>
            <a class="item open"><Ico n="cap" :w="24" :hh="19" /><span>Dersler</span><Ico class="more" n="chevD" :w="16" /></a>
            <a v-for="(s, i) in subMenu" :key="s" class="sub" :class="{ current: i === 1 }">{{ s }}</a>
            <a v-for="m in menuBottom" :key="m.t" class="item" :style="{ gap: m.g + 'px' }"><Ico :n="m.n" :w="m.w" :hh="19" /><span>{{ m.t }}</span><Ico v-if="m.more" class="more right" n="chevR" :w="16" /></a>
          </aside>

          <div class="body">
            <div class="topbar">
              <div class="burger"><i></i><i></i><i></i></div>
              <Ico n="magnify" :w="28" />
              <input class="dash" placeholder="Search Dashboard" />
            </div>
            <main class="content">
              <div class="card main">
                <div class="card title"><h1 v-track="368">Bilgisayar Ağları Dersi</h1></div>
                <div class="cols">
                  <div class="ask">
                    <div class="card box"><input class="soru" placeholder="Soru" /></div>
                    <button>Gönder</button>
                  </div>
                  <div class="card box reply">
                    <div class="area"><textarea :value="answer"></textarea><Ico class="grip" n="grip" :w="11" /></div>
                  </div>
                </div>
              </div>
            </main>
          </div>
          <div class="scroll"><i class="arr top"></i><i class="thumb"></i><i class="arr bottom"></i></div>
        </div>
      </div>

      <aside class="edge-side">
        <span v-for="s in side" :key="s"><Ico :n="s" :w="23" /></span>
        <span class="add"><Ico n="plus" :w="17" /></span>
        <i class="rule"></i>
        <span><Ico n="panel" :w="20" /></span>
        <span><Ico n="gear" :w="25" /></span>
      </aside>
    </div>

    <footer class="taskbar">
      <div class="weather"><Ico n="cloud" :w="30" :hh="20" /><div><span v-track="29">10°C</span><span v-track="47" class="dim">Bulutlu</span></div></div>
      <div class="start"><Ico n="start" :w="30" /></div>
      <div class="find"><Ico n="search" :w="18" /><span v-track="23">Ara</span></div>
      <div class="apps">
        <span v-for="a in apps" :key="a.n" class="app" :class="{ on: a.on }"><Ico :n="a.n" :w="30" /><i v-if="a.run || a.on"></i></span>
      </div>
      <div class="tray">
        <Ico n="up" :w="17" /><Ico n="wifi" :w="20" :hh="16" /><Ico n="speaker" :w="20" :hh="16" /><Ico n="battery" :w="20" :hh="16" />
        <div class="clock"><span v-track="34">21:39</span><span v-track="61">7.12.2023</span></div>
        <b class="badge">1</b>
      </div>
    </footer>
  </div>
</template>

<style>
html, body { margin: 0; overflow: hidden; }
</style>

<style scoped>
* { box-sizing: border-box; }
svg { flex: none; display: block; }
.screen { width: 1920px; height: 1080px; display: flex; flex-direction: column; overflow: hidden; background: #f7f7f7; color: #1b1b1b; font: 14px "Open Sans", "Noto Sans", sans-serif; }
.tabs { height: 40px; display: flex; background: #cdcdcd; box-shadow: inset 0 -1px #c2c2c2; flex: none; }
.tab-tools { width: 115px; display: flex; align-items: center; padding-left: 21px; gap: 28px; position: relative; }
.tab-tools::after { content: ""; position: absolute; right: 0; top: 8px; height: 24px; width: 1px; background: #8f8f8f; }
.tab { display: flex; align-items: center; }
.tab-name { flex: 1; white-space: nowrap; margin-top: -2px; }
.tab.idle { width: 298px; padding: 0 13px; gap: 12px; }
.tab.active { width: 300px; padding: 0 14px 0 13px; gap: 14px; background: #f7f7f7; border-radius: 9px 9px 0 0; }
.new-tab { display: flex; align-items: center; padding-left: 12px; }
.win { margin-left: auto; display: flex; align-items: center; gap: 43px; padding-right: 21px; }
.win svg:first-child { margin-right: 1px; }
.address { height: 50px; display: flex; align-items: center; flex: none; padding-bottom: 2px; }
.nav { width: 125px; display: flex; gap: 33px; padding-left: 24px; }
.url { width: 1338px; height: 38px; border-radius: 19px; background: #fff; display: flex; align-items: center; padding: 0 20px 0 22px; color: #767676; box-shadow: 0 0 3px #e4e4e4; }
.url-text { flex: 1; margin: -2px 0 0 19px; font-size: 16.500px; white-space: nowrap; }
.url-text b { font-weight: 400; color: #111; }
.url .url-text + svg { margin-right: 27px; }
.tools { display: flex; align-items: center; flex: 1; }
.tool { width: 55.500px; display: flex; justify-content: center; }
.tool.ext { width: 66px; padding-left: 6px; }
.bar { width: 2px; height: 22px; background: #d4d4d4; }
.tool.avatar { width: 59px; }
.tool.last { width: 51px; }
.middle { display: flex; height: 930px; flex: none; }
.left { width: 1865px; }
.bookmarks { height: 40px; padding: 0 0 5px 19px; display: flex; align-items: center; color: #111; }
.bookmarks a { display: flex; align-items: center; gap: 9px; flex: none; white-space: nowrap; }
.bookmarks span { margin-top: -1px; }
.page { margin-left: 5px; height: 885px; display: flex; background: #fff; border-radius: 10px; overflow: hidden; box-shadow: 0 0 3px #bdbdbd; font-family: Roboto, sans-serif; font-size: 17.500px; }
.sidebar { width: 304px; flex: none; background: #fff; color: #464a53; position: relative; z-index: 1; }
.logo { height: 100px; background: #7571f9; display: flex; align-items: center; padding: 1px 0 0 37px; color: #fff; font: 700 29px Lato, sans-serif; }
.label { height: 55.500px; padding: 16px 0 0 31px; font-size: 15px; line-height: 22px; letter-spacing: .8px; color: #2b3648; }
.item { height: 58.750px; display: flex; align-items: center; gap: 9px; padding: 1px 22px 0 25px; }
.item span { position: relative; top: -1px; }
.item .more { margin-left: auto; margin-top: 4px; }
.item .more.right { margin: 0 -2px 0 auto; }
.item.open { height: 58px; background: #f3f1fa; }
.sub { height: 51.400px; display: flex; align-items: center; padding: 1px 0 0 56.500px; background: #fafafa; color: #76838f; }
.sub.current { background: #f3f1fa; }
.body { flex: 1; min-width: 0; height: 885px; overflow: hidden; background: #f3f3f9; }
.topbar { height: 100px; background: #fff; display: flex; align-items: center; padding: 0 0 2px 38px; position: relative; }
.burger { width: 28px; display: flex; flex-direction: column; gap: 7.500px; margin-right: 37px; }
.burger i { height: 2px; background: #464a53; }
.topbar svg { color: #000; margin-top: -2px; }
input, textarea { font: 17.500px Roboto, sans-serif; border: 1px solid #ced4da; outline: 0; background: #fff; }
input::placeholder { color: #757575; }
.dash { width: 236px; height: 57px; margin-left: 18px; border-radius: 5px; padding: 1px 15px 0; }
.content { padding: 19px 37px 0; }
.card { background: #fff; border-radius: 12.500px; box-shadow: 7.500px 13.750px 51.250px -35px #a99de7; }
.main { height: 1100px; padding: 36px 37.500px 36px 36.500px; box-shadow: 7.500px 13.750px 51.250px -20px #d9d5f3; }
.title { height: 162px; padding: 58px 36.500px; margin-bottom: 82px; box-shadow: 7.500px 13.750px 51.250px -32px #a99de7; }
h1 { margin: 0; font-weight: 500; font-size: 37.500px; line-height: 48px; color: #212121; white-space: nowrap; width: max-content; }
.cols { display: flex; padding: 0 36px 0 37px; gap: 37px; align-items: flex-start; }
.ask { width: 639px; flex: none; }
.box { padding: 37.500px 36.500px; }
.soru { width: 100%; height: 56px; display: block; padding: 0 20px; }
.reply { width: 640px; flex: none; }
.area { position: relative; }
.grip { position: absolute; right: 2px; bottom: 2px; }
textarea { display: block; width: 100%; height: 410px; background: #f8f9fb; color: #495057; line-height: 26.250px; padding: 7.500px 15px; resize: none; overflow: hidden; }
button { margin-top: 38px; width: 104px; height: 46px; border: 0; border-radius: 5px; background: #7571f9; color: #fff; font: 17.500px Roboto, sans-serif; display: block; }
.scroll { width: 19px; background: #fcfcfc; display: flex; flex-direction: column; align-items: center; padding: 10px 0 9px; }
.arr { border: 5.500px solid transparent; width: 0; height: 0; }
.arr.top { border-top: 0; border-bottom: 8px solid #8b8b8b; }
.thumb { width: 11px; height: 583px; margin-top: 10px; border-radius: 6px; background: #8b8b8b; }
.arr.bottom { margin-top: auto; border-bottom: 0; border-top: 8px solid #8b8b8b; }
.edge-side { width: 55px; display: flex; flex-direction: column; align-items: center; }
.edge-side span { height: 50.200px; display: flex; align-items: center; }
.edge-side span.add { height: 57px; color: #444; }
.rule { width: 35px; height: 2px; background: #bcbcbc; margin-top: 315px; margin-bottom: 3px; }
.taskbar { height: 60px; border-top: 1px solid #b9aebb; display: flex; align-items: center; flex: none; background: linear-gradient(90deg, #dfd8e6 0, #dad6e8 300px, #e0d5e9 520px, #ecd4ea 700px, #fae5e0 900px, #f5e2e0 1000px, #f2d9df 1180px, #efd7d5 1450px, #ebd6ce 1600px, #e8d4d5 1720px, #ead6d6 100%); }
.weather { width: 329px; padding-left: 25px; display: flex; align-items: center; gap: 9px; }
.weather > svg { margin-top: -3px; }
.weather div { display: flex; flex-direction: column; align-items: flex-start; line-height: 20px; margin-top: -2px; }
.weather .dim { color: #595260; }
.start, .find { margin-top: -1px; }
.find { width: 123px; height: 38px; margin-left: 18px; border-radius: 19px; background: #f5f2f9; display: flex; align-items: center; justify-content: center; gap: 6px; box-shadow: 0 1px 1px #cbc4d6; }
.apps { display: flex; margin-left: 5px; }
.app { width: 54.950px; height: 59px; display: flex; align-items: center; justify-content: center; position: relative; padding-bottom: 1px; }
.app.on::before { content: ""; position: absolute; inset: 5px 3px 6px 3px; background: #f7ebe9; border-radius: 5px; box-shadow: 0 0 1px #d3bfbf; }
.app svg { position: relative; }
.app i { position: absolute; bottom: 6px; width: 8px; height: 4px; border-radius: 2px; background: #8a7a7c; }
.app.on i { width: 19px; background: #0a74d0; }
.tray { margin-left: auto; display: flex; align-items: center; padding: 0 24px 2px 0; }
.tray svg { margin-right: 10px; }
.tray svg:first-child { margin-right: 16px; }
.clock { display: flex; flex-direction: column; align-items: flex-end; line-height: 20.500px; width: 73px; margin-right: 15px; }
.badge { width: 20px; height: 20px; border-radius: 50%; background: #0067c0; color: #fff; font-size: 12px; font-weight: 400; display: flex; align-items: center; justify-content: center; }
</style>
